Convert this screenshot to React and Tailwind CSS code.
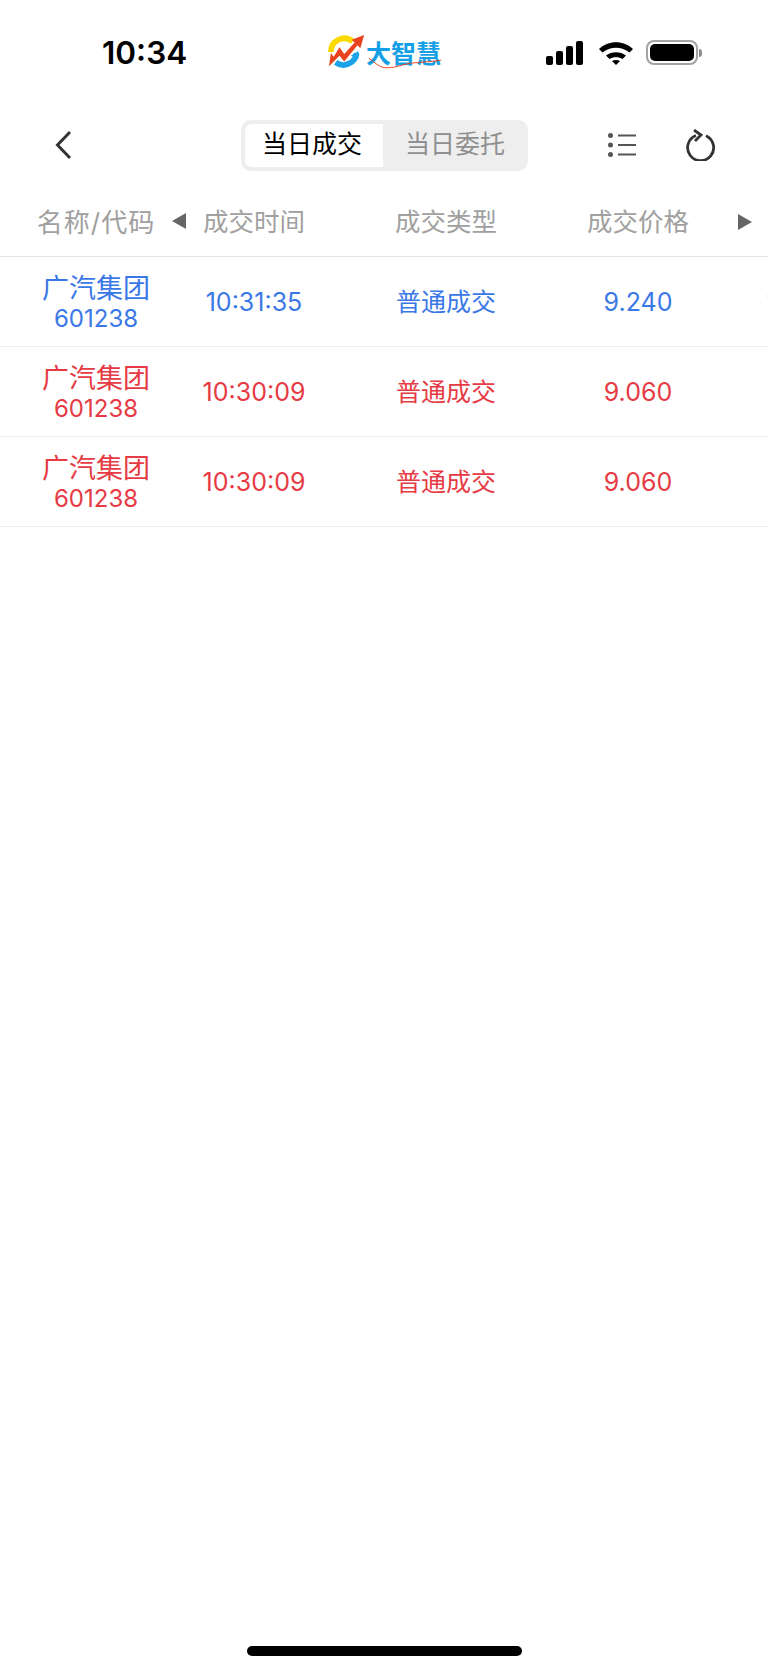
const SANS = "font-['Inter','Noto_Sans_CJK_SC',sans-serif]"

const COLS = ['成交时间', '成交类型', '成交价格']

const ROWS = [
  { name: '广汽集团', code: '601238', time: '10:31:35', type: '普通成交', price: '9.240', extra: '18480.000', color: 'text-[#3b78e7]' },
  { name: '广汽集团', code: '601238', time: '10:30:09', type: '普通成交', price: '9.060', extra: '', color: 'text-[#e63b44]' },
  { name: '广汽集团', code: '601238', time: '10:30:09', type: '普通成交', price: '9.060', extra: '', color: 'text-[#e63b44]' },
]

function Logo() {
  return (
    <div className="relative flex items-center">
      <svg width="42" height="38" viewBox="0 0 44 40" className="shrink-0">
        <path d="M4 20 A14 14 0 0 1 27 9" fill="none" stroke="#fbd800" strokeWidth="6" />
        <path d="M9 31 A14 14 0 0 0 31 21" fill="none" stroke="#19a3e8" strokeWidth="6" />
        <path d="M25 24 L33 19 L33 27 Z" fill="#19a3e8" />
        <path d="M2 35 L4 21 L7 25 L13 15 L18 22 L29 10 L26 7 L39 2 L35 16 L32 13 L18 30 L13 24 L8 29 Z" fill="#e8431c" />
      </svg>
      <span className="ml-[-3px] text-[25px] leading-none font-bold tracking-[0px] text-[#149fe6] font-['Noto_Sans_CJK_SC',sans-serif]">大智慧</span>
      <svg width="76" height="16" viewBox="0 0 80 16" className="absolute top-[22px] left-[40px]">
        <path d="M2 3 C10 9 14 13 20 13 C32 13 38 9 48 8 C58 7 66 7 78 5" fill="none" stroke="#e8431c" strokeWidth="1" />
      </svg>
    </div>
  )
}

function StatusIcons() {
  return (
    <div className="mt-[1px] ml-auto flex items-center">
      <svg width="42" height="26" viewBox="0 0 40 26">
        <rect x="1" y="16" width="7" height="9" rx="2" fill="#000" />
        <rect x="11" y="11" width="7" height="14" rx="2" fill="#000" />
        <rect x="21" y="6" width="7" height="19" rx="2" fill="#000" />
        <rect x="31" y="1" width="7" height="24" rx="2" fill="#000" />
      </svg>
      <svg width="36" height="26" viewBox="0 0 36 26" className="ml-[12px]">
        <path d="M1 9 C10 0 26 0 35 9 L31.5 12.5 C24 6 12 6 4.500 12.500 Z" fill="#000" />
        <path d="M8 15.500 C13 11 23 11 28 15.500 L24.500 19 C21 16.500 15 16.500 11.500 19 Z" fill="#000" />
        <path d="M14 21 C16.500 19.500 19.500 19.500 22 21 L18 25 Z" fill="#000" />
      </svg>
      <div className="ml-[12px] flex items-center">
        <div className="flex h-[25px] w-[52px] items-center rounded-[8px] border-2 border-[#a3a3a3] p-[2px]">
          <div className="h-full w-full rounded-[5px] bg-black" />
        </div>
        <div className="ml-[1px] h-[8px] w-[3px] rounded-r-full bg-[#8a8a8a]" />
      </div>
    </div>
  )
}

function Triangle({ dir }) {
  return (
    <svg width="14" height="16" viewBox="0 0 14 16">
      <path d={dir === 'left' ? 'M14 0 L14 16 L0 8 Z' : 'M0 0 L0 16 L14 8 Z'} fill="#666" />
    </svg>
  )
}

export default function App() {
  return (
    <div className={`relative flex h-[1665px] w-[768px] flex-col overflow-hidden bg-white ${SANS}`}>
      {/* status bar */}
      <div className="flex h-[104px] items-center pr-[66px] pl-[102px]">
        <span className="mt-[2px] w-[225px] text-[31.500px] leading-none font-semibold text-black">10:34</span>
        <Logo />
        <StatusIcons />
      </div>

      {/* nav */}
      <div className="flex h-[84px] items-center pr-[52px] pb-[2px] pl-[51px]">
        <svg width="22" height="32" viewBox="0 0 22 32" className="shrink-0">
          <path d="M19 3 L6.500 16 L19 29" fill="none" stroke="#333" strokeWidth="3" />
        </svg>
        <div className="ml-[168px] flex h-[51px] w-[287px] overflow-hidden rounded-[10px] bg-[#eeeeee] p-[4px]">
          <div className="flex w-[138px] items-center justify-center rounded-l-[7px] bg-white pr-[4px] text-[25px] text-black">当日成交</div>
          <div className="flex flex-1 items-center justify-center pl-[3px] text-[25px] text-[#8f8f8f]">当日委托</div>
        </div>
        <div className="ml-auto flex items-center gap-[49px]">
          <svg width="30" height="26" viewBox="0 0 30 26">
            <circle cx="3.500" cy="3.500" r="2.500" fill="#555" />
            <circle cx="3.500" cy="13" r="2.500" fill="#555" />
            <circle cx="3.500" cy="22.500" r="2.500" fill="#555" />
            <path d="M11 3.500 H29 M11 13 H29 M11 22.500 H29" stroke="#555" strokeWidth="1.800" />
          </svg>
          <svg width="30" height="32" viewBox="0 0 30 32">
            <path d="M10 6.500 A13 13 0 1 0 20 6.800" fill="none" stroke="#333" strokeWidth="2.800" />
            <path d="M8 1 L15 6 L9 12" fill="none" stroke="#333" strokeWidth="2.800" />
          </svg>
        </div>
      </div>

      {/* table header */}
      <div className="flex h-[69px] items-center border-b border-[#e5e5e5]">
        <div className="relative flex w-[192px] shrink-0 items-center justify-center text-[26px] tracking-[1px] text-[#a0a0a0]">
          名称/代码
          <div className="absolute top-[10px] left-[172px]"><Triangle dir="left" /></div>
        </div>
        <div className="flex flex-1 overflow-hidden">
          <div className="ml-[-34px] flex">
            {COLS.map((c) => (
              <div key={c} className="w-[192px] shrink-0 text-center text-[25.500px] text-[#a0a0a0]">{c}</div>
            ))}
          </div>
        </div>
        <div className="mr-[16px] ml-[-30px]"><Triangle dir="right" /></div>
      </div>

      {/* rows */}
      {ROWS.map((r, i) => (
        <div key={i} className={`flex h-[90px] items-center border-b border-[#ececec] ${r.color}`}>
          <div className="mt-[3px] flex w-[192px] shrink-0 flex-col items-center">
            <span className="text-[27px] leading-[32px]">{r.name}</span>
            <span className="text-[24px] leading-[28px]">{r.code}</span>
          </div>
          <div className="flex flex-1 overflow-hidden">
            <div className="mt-[3px] ml-[-34px] flex shrink-0 items-center text-[25px]">
              <div className="w-[192px] text-center">{r.time}</div>
              <div className="w-[192px] text-center">{r.type}</div>
              <div className="w-[192px] text-center">{r.price}</div>
              <div className="w-[192px] text-center">{r.extra}</div>
            </div>
          </div>
        </div>
      ))}

      {/* home indicator */}
      <div className="mt-auto mb-[9px] h-[10px] w-[275px] self-center rounded-full bg-black" />
    </div>
  )
}
